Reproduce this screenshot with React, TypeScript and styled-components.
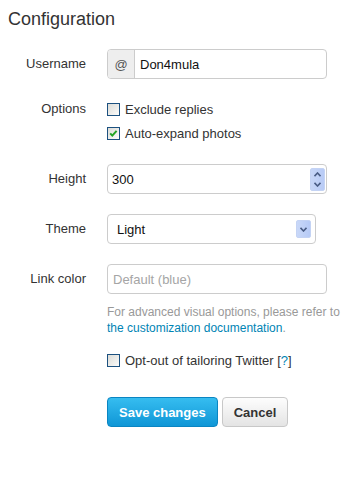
import styled, { createGlobalStyle } from "styled-components";

const GlobalStyle = createGlobalStyle`
  body {
    margin: 0;
    background: #fff;
    font-family: "Liberation Sans", Arial, sans-serif;
    font-size: 13px;
    color: #333;
  }
`;

const Page = styled.div`
  padding: 9px 8px 0;
`;

const Title = styled.h3`
  margin: 0 0 20px;
  font-size: 18px;
  font-weight: normal;
  line-height: 20px;
  color: #333;
`;

const Row = styled.div<{ $mb?: number; $mt?: number }>`
  display: grid;
  grid-template-columns: 78px 1fr;
  column-gap: 21px;
  align-items: start;
  margin-top: ${(p) => p.$mt ?? 0}px;
  margin-bottom: ${(p) => p.$mb ?? 0}px;
`;

const Label = styled.div<{ $lh: number }>`
  text-align: right;
  line-height: ${(p) => p.$lh}px;
  color: #333;
`;

const Field = styled.div<{ $w: number }>`
  display: flex;
  align-items: center;
  box-sizing: border-box;
  width: ${(p) => p.$w}px;
  height: 30px;
  border: 1px solid #ccc;
  border-radius: 4px;
  background: #fff;
  overflow: hidden;
`;

const Addon = styled.span`
  display: flex;
  align-items: center;
  justify-content: center;
  width: 26px;
  height: 100%;
  background: #eee;
  border-right: 1px solid #ccc;
  color: #555;
  font-size: 13px;
`;

const TextInput = styled.input<{ $pl?: number }>`
  flex: 1;
  min-width: 0;
  height: 100%;
  border: 0;
  outline: none;
  padding: 0 0 0 ${(p) => p.$pl ?? 5}px;
  font: 13px "Liberation Sans", Arial, sans-serif;
  color: #111;
  background: transparent;

  &::placeholder {
    color: #a5a5a5;
  }
`;

const SelectValue = styled.span`
  flex: 1;
  padding-left: 9px;
  color: #111;
`;

const Spinner = styled.span`
  display: flex;
  flex-direction: column;
  justify-content: space-between;
  align-items: center;
  box-sizing: border-box;
  width: 15px;
  height: 23px;
  margin-right: 1px;
  padding: 3px 0;
  background: linear-gradient(90deg, #c7d6f7, #b8cbf6);
  border: 1px solid #c4d3f4;
  border-radius: 2px;
`;

const DropButton = styled.span`
  display: flex;
  align-items: center;
  justify-content: center;
  box-sizing: border-box;
  width: 15px;
  height: 18px;
  margin-right: 4px;
  background: linear-gradient(90deg, #c9d8f8, #b6caf6);
  border: 1px solid #c4d3f4;
  border-radius: 2px;
`;

const Options = styled.div`
  display: flex;
  flex-direction: column;
`;

const CheckLine = styled.label`
  display: flex;
  align-items: center;
  gap: 5px;
  height: 24px;
  color: #333;
`;

const Box = styled.span`
  display: flex;
  align-items: center;
  justify-content: center;
  box-sizing: border-box;
  width: 13px;
  height: 13px;
  border: 1px solid #1c5180;
  background: linear-gradient(135deg, #dcdcd7, #fbfbfa);
`;

const Help = styled.p`
  margin: 10px 0 0;
  font-size: 12px;
  line-height: 16px;
  color: #999;
  white-space: nowrap;
`;

const Link = styled.a`
  color: #0084b4;
  text-decoration: none;
`;

const Actions = styled.div`
  display: flex;
  gap: 4px;
  margin: 25px 0 0 99px;
`;

const Button = styled.button<{ $primary?: boolean }>`
  height: 30px;
  padding: 0 11px;
  border-radius: 4px;
  font: bold 13px "Liberation Sans", Arial, sans-serif;
  cursor: pointer;
  border: 1px solid ${(p) => (p.$primary ? "#0a85c2" : "#c8c8c8")};
  color: ${(p) => (p.$primary ? "#fff" : "#333")};
  background: ${(p) =>
    p.$primary
      ? "linear-gradient(#36bdf0, #0f96d6)"
      : "linear-gradient(#fdfdfd, #e4e4e4)"};
`;

const Arrow = ({ up }: { up?: boolean }) => (
  <svg width="7" height="5" viewBox="0 0 7 5">
    <path
      d={up ? "M0.5 4.2 L3.5 1 L6.5 4.2" : "M0.5 0.8 L3.5 4 L6.5 0.8"}
      fill="none"
      stroke="#4a5d85"
      strokeWidth="1.6"
    />
  </svg>
);

const Checkbox = ({ checked, children }: { checked?: boolean; children: React.ReactNode }) => (
  <CheckLine>
    <Box>
      {checked && (
        <svg width="11" height="11" viewBox="0 0 11 11">
          <path d="M2.2 5.4 L4.3 7.6 L8.6 2.8" fill="none" stroke="#22a322" strokeWidth="2" />
        </svg>
      )}
    </Box>
    <span>{children}</span>
  </CheckLine>
);

export default function App() {
  return (
    <Page>
      <GlobalStyle />
      <Title>Configuration</Title>

      <Row $mb={18}>
        <Label $lh={30}>Username</Label>
        <Field $w={220}>
          <Addon>@</Addon>
          <TextInput defaultValue="Don4mula" />
        </Field>
      </Row>

      <Row $mb={19}>
        <Label $lh={24}>Options</Label>
        <Options>
          <Checkbox>Exclude replies</Checkbox>
          <Checkbox checked>Auto-expand photos</Checkbox>
        </Options>
      </Row>

      <Row $mb={20}>
        <Label $lh={30}>Height</Label>
        <Field $w={220}>
          <TextInput defaultValue="300" $pl={4} />
          <Spinner>
            <Arrow up />
            <Arrow />
          </Spinner>
        </Field>
      </Row>

      <Row $mb={20}>
        <Label $lh={30}>Theme</Label>
        <Field $w={209}>
          <SelectValue>Light</SelectValue>
          <DropButton>
            <Arrow />
          </DropButton>
        </Field>
      </Row>

      <Row>
        <Label $lh={30}>Link color</Label>
        <div>
          <Field $w={220}>
            <TextInput placeholder="Default (blue)" $pl={5} />
          </Field>
          <Help>
            For advanced visual options, please refer to
            <br />
            <Link href="#">the customization documentation</Link>.
          </Help>
        </div>
      </Row>

      <Row $mt={12}>
        <span />
        <Checkbox>
          Opt-out of tailoring Twitter [<Link href="#">?</Link>]
        </Checkbox>
      </Row>

      <Actions>
        <Button $primary>Save changes</Button>
        <Button>Cancel</Button>
      </Actions>
    </Page>
  );
}
